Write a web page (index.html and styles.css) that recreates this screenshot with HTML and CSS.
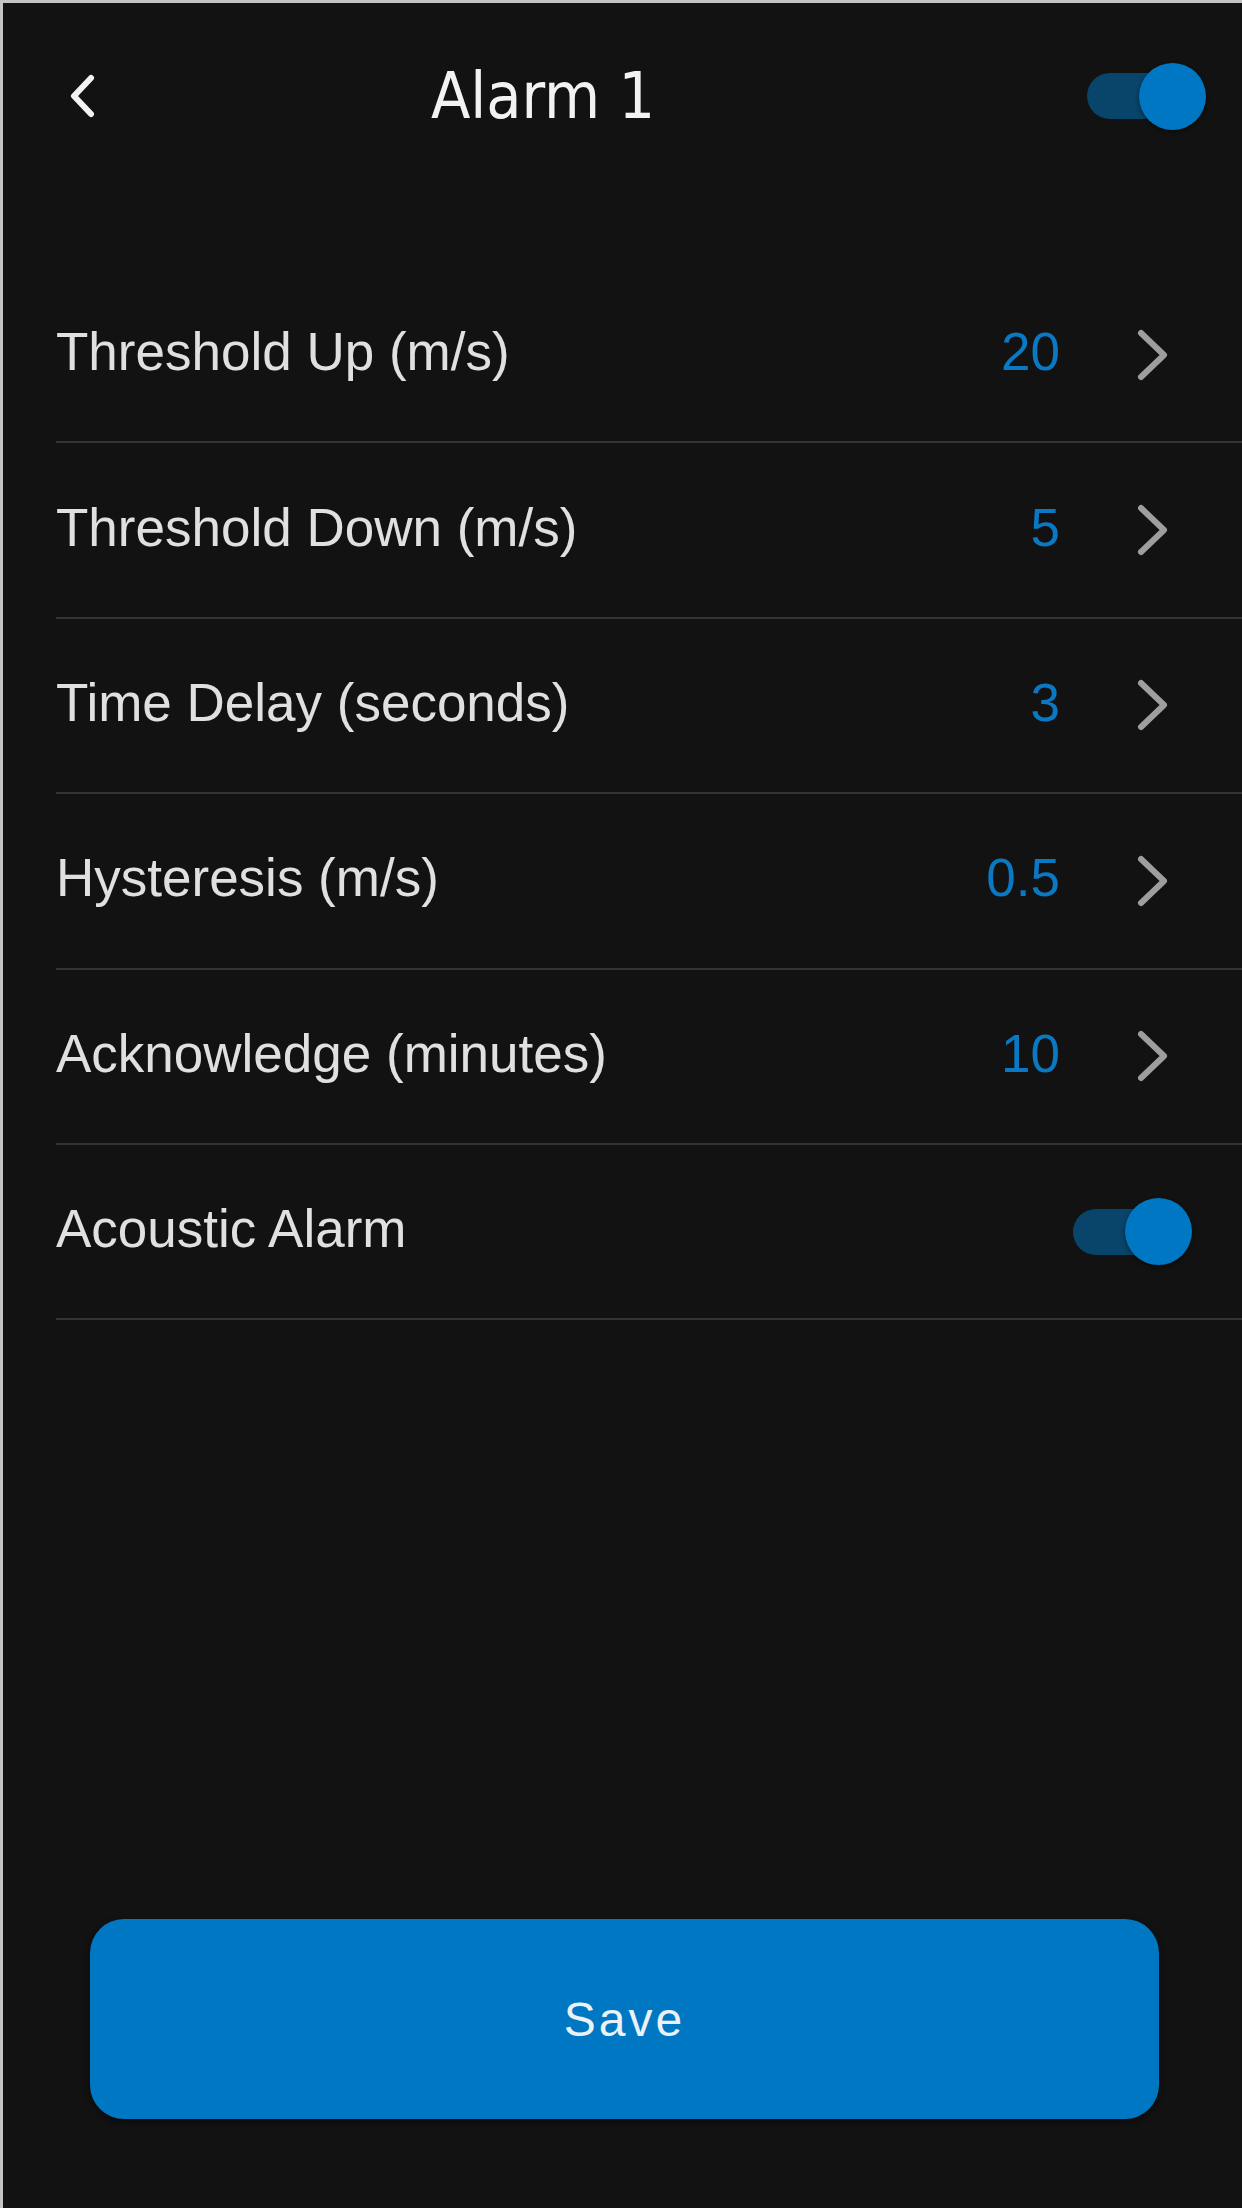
FILE: index.html
```html
<!DOCTYPE html>
<html lang="en">
<head>
    <meta charset="UTF-8">
    <meta name="viewport" content="width=device-width, initial-scale=1.0">
    <title>Alarm 1</title>
    <link rel="stylesheet" href="styles.css">
</head>
<body>
    <div class="page">
        <header class="topbar">
            <button class="back" aria-label="Back">
                <svg viewBox="0 0 28 48" width="28" height="48"><polyline points="23,6 6,24 23,42"/></svg>
            </button>
            <h1 class="title">Alarm 1</h1>
            <span class="switch" role="switch" aria-checked="true"></span>
        </header>

        <ul class="settings">
            <li class="row">
                <span class="label">Threshold Up (m/s)</span>
                <span class="value">20</span>
                <svg class="chevron" viewBox="0 0 34 56"><polyline points="5,6 28,28 5,50"/></svg>
            </li>
            <li class="row">
                <span class="label">Threshold Down (m/s)</span>
                <span class="value">5</span>
                <svg class="chevron" viewBox="0 0 34 56"><polyline points="5,6 28,28 5,50"/></svg>
            </li>
            <li class="row">
                <span class="label">Time Delay (seconds)</span>
                <span class="value">3</span>
                <svg class="chevron" viewBox="0 0 34 56"><polyline points="5,6 28,28 5,50"/></svg>
            </li>
            <li class="row">
                <span class="label">Hysteresis (m/s)</span>
                <span class="value">0.5</span>
                <svg class="chevron" viewBox="0 0 34 56"><polyline points="5,6 28,28 5,50"/></svg>
            </li>
            <li class="row">
                <span class="label">Acknowledge (minutes)</span>
                <span class="value">10</span>
                <svg class="chevron" viewBox="0 0 34 56"><polyline points="5,6 28,28 5,50"/></svg>
            </li>
            <li class="row">
                <span class="label">Acoustic Alarm</span>
                <span class="switch" role="switch" aria-checked="true"></span>
            </li>
        </ul>

        <div class="actions">
            <button class="save">Save</button>
        </div>
    </div>
</body>
</html>
```

FILE: styles.css
```css
html, body {
    margin: 0;
    height: 100%;
}
body {
    box-sizing: border-box;
    background-color: #121212;
    color: #e0e0e0;
    font-family: "Liberation Sans", Arial, sans-serif;
    border-top: 3px solid #c4c4c4;
    border-left: 3px solid #c4c4c4;
}
.page {
    display: flex;
    flex-direction: column;
    height: 100%;
}

/* top bar */
.topbar {
    display: grid;
    grid-template-columns: 1fr auto;
    column-gap: 4px;
    align-items: center;
    height: 186px;
    padding-right: 47px;
}
.back {
    grid-row: 1;
    grid-column: 1;
    justify-self: start;
    display: flex;
    margin-left: 65px;
    padding: 0;
    border: none;
    background: none;
    cursor: pointer;
}
.back polyline {
    fill: none;
    stroke: #f2f2f2;
    stroke-width: 6;
    stroke-linecap: round;
    stroke-linejoin: round;
}
.title {
    grid-row: 1;
    grid-column: 1;
    justify-self: center;
    margin: 0;
    font-family: "DejaVu Sans Condensed", "DejaVu Sans", sans-serif;
    font-stretch: condensed;
    font-weight: normal;
    font-size: 64px;
    line-height: 1;
    color: #f2f2f2;
}

/* switch */
.switch {
    position: relative;
    display: block;
    width: 108px;
    height: 46px;
    border-radius: 23px;
    background-color: #09446a;
}
.switch::after {
    content: "";
    position: absolute;
    top: -10.5px;
    right: -11px;
    width: 67px;
    height: 67px;
    border-radius: 50%;
    background-color: #0077c2;
    box-shadow: 0 2px 4px rgba(0,0,0,0.45);
}

/* settings list */
.settings {
    list-style: none;
    margin: 0 0 0 53px;
    padding: 79px 0 0;
}
.row {
    display: flex;
    align-items: center;
    box-sizing: border-box;
    height: 175.4px;
    padding-right: 72px;
    border-bottom: 2px solid #333;
}
.label {
    flex: 1;
    font-size: 53px;
    padding-bottom: 6px;
}
.value {
    margin-right: 76px;
    padding-bottom: 6px;
    font-size: 53px;
    color: #0a78c2;
}
.chevron {
    width: 34px;
    height: 56px;
}
.chevron polyline {
    fill: none;
    stroke: #9e9e9e;
    stroke-width: 6;
    stroke-linecap: round;
    stroke-linejoin: round;
}
.row .switch {
    margin-right: -11px;
}

/* save */
.actions {
    margin-top: auto;
    padding: 0 83px 89px 87px;
}
.save {
    display: block;
    width: 100%;
    height: 200px;
    border: none;
    border-radius: 34px;
    background-color: #0077c2;
    color: #eaf2f8;
    font-family: "Liberation Sans", Arial, sans-serif;
    font-size: 48px;
    letter-spacing: 3px;
    box-shadow: 0 3px 6px rgba(0,0,0,0.5);
    cursor: pointer;
}
```
